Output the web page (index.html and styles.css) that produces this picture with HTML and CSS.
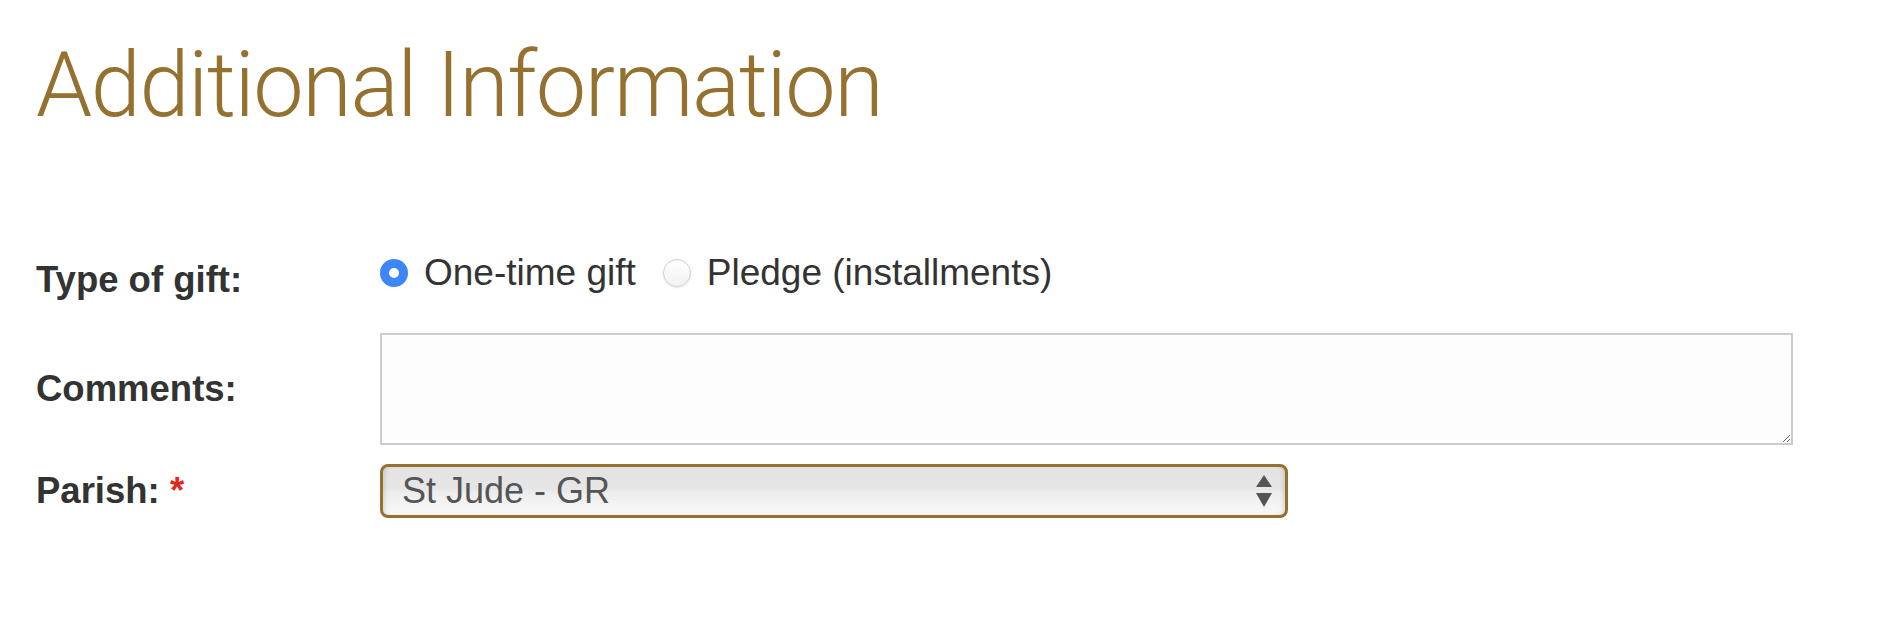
FILE: index.html
```html
<!DOCTYPE html>
<html lang="en">

<head>
    <meta charset="UTF-8">
    <meta name="viewport" content="width=device-width, initial-scale=1.0">
    <title>Additional Information</title>
    <link rel="stylesheet" href="styles.css">
</head>

<body>
    <div class="page">
        <h1 class="section-title">Additional Information</h1>

        <div class="form-rows">
            <div class="form-row row-gift">
                <span class="field-label">Type of gift:</span>
                <div class="radio-group">
                    <label class="radio-option">
                        <span class="radio checked"></span>
                        One-time gift
                    </label>
                    <label class="radio-option">
                        <span class="radio"></span>
                        Pledge (installments)
                    </label>
                </div>
            </div>

            <div class="form-row row-comments">
                <span class="field-label">Comments:</span>
                <textarea class="comments-box"></textarea>
            </div>

            <div class="form-row row-parish">
                <span class="field-label">Parish: <span class="required">*</span></span>
                <div class="select-box">
                    <span class="select-value">St Jude - GR</span>
                    <svg class="select-arrows" width="16" height="32" viewBox="0 0 16 32">
                        <polygon points="8,0 16,12 0,12" fill="#555" />
                        <polygon points="0,18 16,18 8,32" fill="#555" />
                    </svg>
                </div>
            </div>
        </div>
    </div>
</body>

</html>
```

FILE: styles.css
```css
body {
    margin: 0;
    background: #fff;
    font-family: "Liberation Sans", Arial, sans-serif;
    color: #333;
}

.page {
    padding: 41px 0 0 36px;
}

.section-title {
    margin: 0;
    font-family: Roboto, "Liberation Sans", sans-serif;
    font-weight: 300;
    font-size: 90px;
    line-height: 1;
    letter-spacing: -1.4px;
    color: #94712f;
}

.form-rows {
    margin-top: 121px;
    display: flex;
    flex-direction: column;
}

.form-row {
    display: flex;
    align-items: center;
}

.field-label {
    flex: none;
    width: 344px;
    font-size: 36.5px;
    font-weight: bold;
    color: #333;
}

.required {
    color: #e2261c;
}

/* type of gift */
.row-gift {
    height: 48px;
    align-items: flex-start;
}

.row-gift .field-label {
    padding-top: 7px;
}

.radio-group {
    display: flex;
    align-items: center;
}

.radio-option {
    display: flex;
    align-items: center;
    font-size: 37px;
    color: #333;
    margin-right: 27px;
}

.radio {
    width: 28px;
    height: 28px;
    margin-right: 16px;
    border-radius: 50%;
    box-sizing: border-box;
    border: 1px solid #d0d0d0;
    background: linear-gradient(#fff, #f2f2f2);
    box-shadow: 0 1px 2px rgba(0, 0, 0, 0.1);
}

.radio.checked {
    border: 9px solid #3d86f5;
    background: #fff;
    box-shadow: none;
}

/* comments */
.row-comments {
    margin-top: 33px;
}

.comments-box {
    width: 1413px;
    height: 112px;
    box-sizing: border-box;
    margin: 0;
    border: 2px solid #cccccc;
    background: #fdfdfd;
    font: 36px "Liberation Sans", sans-serif;
}

/* parish */
.row-parish {
    margin-top: 19px;
}

.select-box {
    width: 908px;
    height: 54px;
    box-sizing: border-box;
    display: flex;
    align-items: center;
    justify-content: space-between;
    padding: 0 13px 0 19px;
    border: 3px solid #94712f;
    border-radius: 8px;
    background: linear-gradient(#e3e3e3 0%, #e6e6e6 45%, #eeeeee 55%, #f8f8f8 100%);
    box-shadow: inset 4px 0 4px -2px rgba(0, 0, 0, 0.12), inset -4px 0 4px -2px rgba(0, 0, 0, 0.12);
}

.select-value {
    font-size: 36px;
    color: #555;
}

.select-arrows {
    display: block;
}
```
